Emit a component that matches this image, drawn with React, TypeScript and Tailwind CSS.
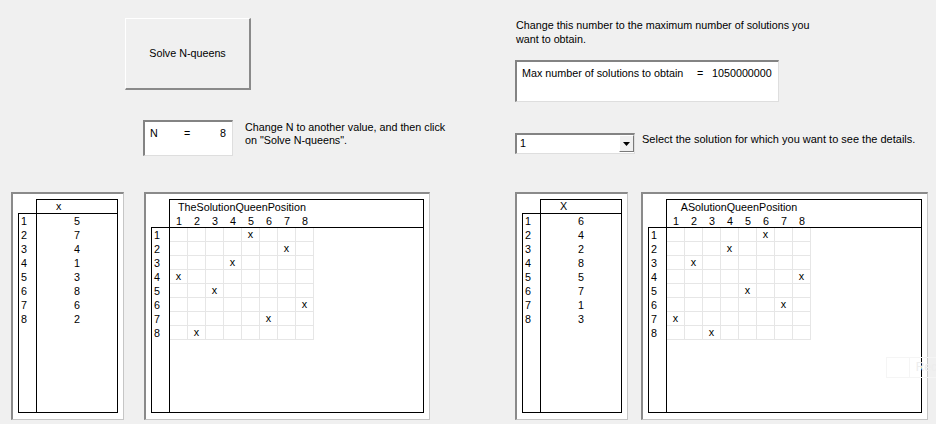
import React from "react";

const sol1 = [5, 7, 4, 1, 3, 8, 6, 2];
const sol2 = [6, 4, 2, 8, 5, 7, 1, 3];
const idx = [1, 2, 3, 4, 5, 6, 7, 8];

const frame =
  "bg-white border-t-2 border-l-2 border-r border-b border-t-[#8a8a8a] border-l-[#8a8a8a] border-r-[#c6c6c6] border-b-[#c6c6c6] pt-[5px] pl-[5px] pr-[5px] pb-[6px] h-[228px] shrink-0";

function ListPanel({ header, values, className }: { header: string; values: number[]; className: string }) {
  return (
    <div className={`${frame} ${className}`}>
      <div className="ml-[18px] h-[14px] border-t border-l border-r border-black pl-[19px] leading-[13px]">{header}</div>
      <div className="flex h-[200px] border border-black">
        <div className="w-[18px] border-r border-black pl-[2px]">
          {idx.map((i) => (
            <div key={i} className="h-[14px] leading-[14px]">
              {i}
            </div>
          ))}
        </div>
        <div className="flex-1">
          {values.map((v, i) => (
            <div key={i} className="h-[14px] leading-[14px] text-center">
              {v}
            </div>
          ))}
        </div>
      </div>
    </div>
  );
}

function GridPanel({ title, values, className }: { title: string; values: number[]; className: string }) {
  return (
    <div className={`${frame} ${className}`}>
      <div className="ml-[18px] h-[28px] border-t border-l border-r border-black">
        <div className="w-[144px] h-[14px] leading-[14px] text-center">{title}</div>
        <div className="flex h-[13px] pt-[1px]">
          {idx.map((i) => (
            <div key={i} className="w-[18px] text-center leading-[13px]">
              {i}
            </div>
          ))}
        </div>
      </div>
      <div className="flex h-[186px] border border-black">
        <div className="w-[18px] border-r border-black pl-[2px] shrink-0">
          {idx.map((i) => (
            <div key={i} className="h-[14px] leading-[14px]">
              {i}
            </div>
          ))}
        </div>
        <div className="flex-1">
          {values.map((v, r) => (
            <div key={r} className="flex">
              {idx.map((c) => (
                <div
                  key={c}
                  className="w-[18px] h-[14px] border-r border-b border-[#e6e6e6] text-center leading-[12px]"
                >
                  {c === v ? "x" : ""}
                </div>
              ))}
            </div>
          ))}
        </div>
      </div>
    </div>
  );
}

const sunken =
  "bg-white border-t-2 border-l-2 border-r border-b border-t-[#838383] border-l-[#838383] border-r-[#dedede] border-b-[#dedede]";

export default function App() {
  return (
    <div className="relative w-[936px] h-[424px] overflow-hidden bg-[#f0f0f0] text-black text-[10.75px] font-['Liberation_Sans',Arial,sans-serif]">
      <div className="flex h-[192px]">
        <div className="w-[515px] shrink-0 pt-[18px]">
          <div className="ml-[125px] w-[126px] h-[72px] flex items-center justify-center bg-[#f0f0f0] border-t border-l border-t-white border-l-white border-r-2 border-b-2 border-r-[#8a8a8a] border-b-[#8a8a8a]">
            Solve N-queens
          </div>
          <div className="mt-[30px] ml-[143px] flex items-start">
            <div className={`${sunken} w-[90px] h-[36px] pt-[5px] pl-[5px] pr-[6px] flex leading-[13px]`}>
              <span className="w-[34px]">N</span>
              <span>=</span>
              <span className="flex-1 text-right">8</span>
            </div>
            <div className="ml-[12px] mt-[1px] leading-[13px]">
              Change N to another value, and then click
              <br />
              on "Solve N-queens".
            </div>
          </div>
        </div>
        <div className="pt-[19px]">
          <div className="leading-[13.5px] ml-[1px]">
            Change this number to the maximum number of solutions you
            <br />
            want to obtain.
          </div>
          <div className={`${sunken} mt-[14px] w-[264px] h-[42px] pt-[5px] pl-[5px] flex leading-[13px]`}>
            <span className="w-[175px]">Max number of solutions to obtain</span>
            <span className="w-[15px]">=</span>
            <span>1050000000</span>
          </div>
          <div className="mt-[31px] flex items-start">
            <div className={`${sunken} w-[120px] h-[21px] flex`}>
              <span className="flex-1 pl-[3px] leading-[17px]">1</span>
              <div className="w-[15px] h-[17px] flex items-center justify-center bg-[#f0f0f0] border-t border-l border-t-white border-l-white border-r border-b border-r-[#7a7a7a] border-b-[#7a7a7a]">
                <svg width="7" height="4" viewBox="0 0 7 4">
                  <polygon points="0,0 7,0 3.5,4" fill="#000" />
                </svg>
              </div>
            </div>
            <div className="ml-[7px] leading-[13px] text-[11px]">Select the solution for which you want to see the details.</div>
          </div>
        </div>
      </div>

      <div className="flex items-start pl-[11px]">
        <ListPanel header="x" values={sol1} className="w-[113px]" />
        <GridPanel title="TheSolutionQueenPosition" values={sol1} className="ml-[20px] w-[286px]" />
        <ListPanel header="X" values={sol2} className="ml-[85px] w-[113px]" />
        <GridPanel title="ASolutionQueenPosition" values={sol2} className="ml-[13px] w-[287px]" />
      </div>

      <div className="absolute left-[886px] top-[357px] w-[52px] h-[21px] border border-[#f5f5f5] flex">
        <div className="w-[25px] border-r border-[#f5f5f5]" />
        <span className="ml-[6px] leading-[19px] text-[12px] text-[#ededed]">Rec</span>
      </div>
    </div>
  );
}
